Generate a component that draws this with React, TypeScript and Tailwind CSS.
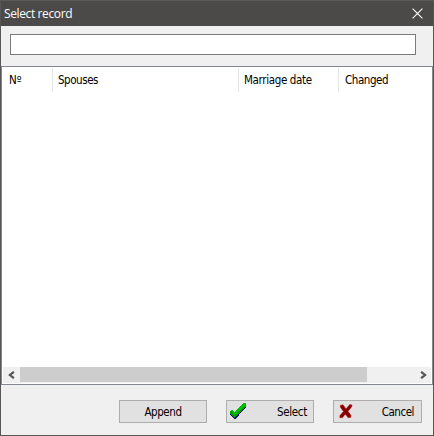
import React from "react";

function CheckIcon() {
  return (
    <svg width="18" height="17" viewBox="0 0 18 17" className="block" shapeRendering="crispEdges">
      <path d="M1 9 3 8 5.5 10.5 15 1H17V4L7 15.5H5L1 11Z" fill="#000080" />
      <path d="M1 8 3 7 5.5 9.5 14.5 0H17V3L6.5 14.5H5L1 10.5Z" fill="#009a00" />
      <path d="M1 8 3 7 5.5 9.5 14.5 0H17V1.5L6 12.5 3 10Z" fill="#00be00" />
    </svg>
  );
}

function CrossIcon() {
  return (
    <svg width="14" height="15" viewBox="0 0 14 15" className="block">
      <path d="M1.2 1.5 4 .8 7 5 10.8.6 13 1 12.5 3 9 7.3 12 11.5 11.5 13.5 9 13.5 6.2 10 3.3 13.8 .8 13.5 1 11.5 4.5 7.4 1.6 3.5Z" fill="#8d0000" stroke="#b01010" strokeWidth=".6" />
      <path d="M3 2.8 10.5 12.5M11.3 2.3 2.5 12.6" stroke="#820000" strokeWidth="1.8" />
    </svg>
  );
}

function Chevron({ right = false }: { right?: boolean }) {
  return (
    <svg width="7" height="8" viewBox="0 0 7 8" className={right ? "rotate-180" : ""}>
      <path d="M5.9.8 1.9 4l4 3.2" fill="none" stroke="#555" strokeWidth="2.2" />
    </svg>
  );
}

const button = "flex h-[23px] items-center border border-[#adadad] bg-[#e1e1e1]";
const headerCell = "flex h-full items-center whitespace-nowrap";

export default function App() {
  return (
    <div className="flex h-[436px] w-[434px] flex-col border border-t-[#5b5a58] border-[#575655] bg-[#f0f0f0] font-['DejaVu_Sans_Condensed','DejaVu_Sans',sans-serif] text-[11.5px] leading-[14px] text-black">
      <header className="flex h-[25px] shrink-0 items-center justify-between bg-[#4b4a48] pr-[10px] pl-[3px] font-['Open_Sans','Noto_Sans',sans-serif] text-[12px] text-white">
        <span className="tracking-[-0.38px]">Select record</span>
        <svg width="11" height="11" viewBox="0 0 11 11">
          <path d="M.6.6l9.8 9.8M10.4.6L.6 10.4" stroke="#fff" strokeWidth="1.1" />
        </svg>
      </header>
      <div className="h-[40px] shrink-0 px-[9px] pt-[8px]">
        <input aria-label="Search" className="block h-[21px] w-[406px] border border-[#7a7a7a] bg-white px-1 outline-none" />
      </div>
      <main className="flex h-[319px] shrink-0 flex-col border border-[#828790] bg-white p-px">
        <div className="flex h-[24px] items-center">
          <div className={`${headerCell} w-[50px] border-r border-[#e5e5e5] pl-[6px]`}><span>Nº</span></div>
          <div className={`${headerCell} w-[186px] border-r border-[#e5e5e5] pl-[5px]`}><span className="tracking-[-0.45px]">Spouses</span></div>
          <div className={`${headerCell} w-[100px] border-r border-[#e5e5e5] pl-[5px]`}><span className="tracking-[-0.35px]">Marriage date</span></div>
          <div className={`${headerCell} pl-[6px]`}><span className="tracking-[-0.45px]">Changed</span></div>
        </div>
        <div className="grow" />
        <div className="flex h-[16px] items-center bg-[#f0f0f0]">
          <div className="flex w-[17px] justify-center"><Chevron /></div>
          <div className="h-[15px] w-[347px] self-start bg-[#cdcdcd]" />
          <div className="flex grow justify-end pr-[4px]"><Chevron right /></div>
        </div>
      </main>
      <footer className="flex pt-[15px] pl-[118px]">
        <button className={`${button} mr-[19px] w-[88px] justify-center tracking-[-0.45px]`}>Append</button>
        <button className={`${button} mr-[19px] w-[88px] justify-between pr-[6px] pl-[2px] tracking-[-0.3px]`}><CheckIcon /><span>Select</span></button>
        <button className={`${button} w-[89px] justify-between pr-[7px] pl-[5px] tracking-[-0.45px]`}><CrossIcon /><span>Cancel</span></button>
      </footer>
    </div>
  );
}
